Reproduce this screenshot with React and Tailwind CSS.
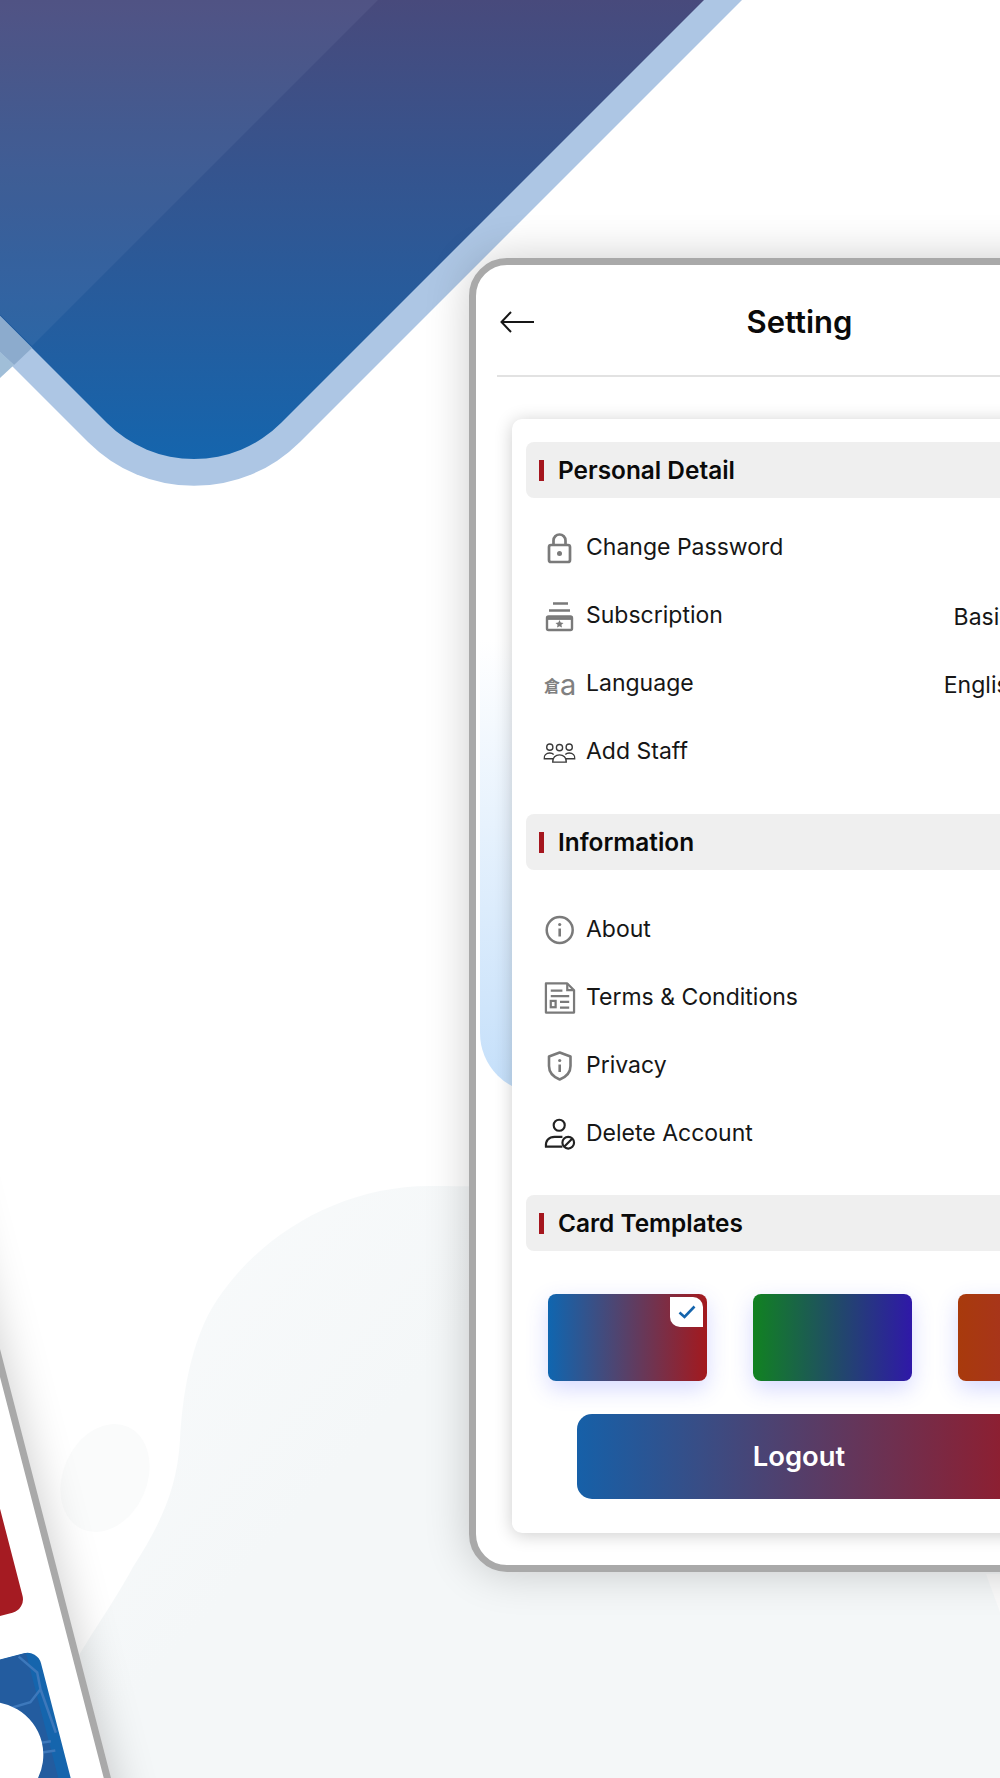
import React from "react";

const G = "#7a7a7a";

function LockIcon() {
  return (
    <svg width="32" height="32" viewBox="0 0 32 32" fill="none" stroke={G} strokeWidth="2.7">
      <rect x="5" y="13" width="21" height="17" rx="2" />
      <path d="M9.500 13V8.500a6 6 0 0 1 12 0V13" />
      <circle cx="15.500" cy="21.500" r="2.500" fill={G} stroke="none" />
    </svg>
  );
}
function SubIcon() {
  return (
    <svg width="32" height="32" viewBox="0 0 32 32" fill="none" stroke={G} strokeWidth="2.400">
      <path d="M9 3.500H24M5 10.500H26" />
      <rect x="3" y="16.500" width="25" height="13.500" rx="1.500" />
      <path d="M3 18.500H28" strokeWidth="2.800" />
      <path d="M15.500 20l1.200 2.600 2.800.3-2.100 1.900.6 2.800-2.500-1.400-2.500 1.400.6-2.800-2.100-1.900 2.800-.3z" fill={G} stroke="none" />
    </svg>
  );
}
function LangIcon() {
  return (
    <span className="flex h-8 w-8 items-center pt-[1px] text-[#808080]">
      <span className="text-[16px] leading-none font-bold font-['Noto_Sans_CJK_TC',sans-serif]">倉</span>
      <span className="text-[29px] leading-none font-['Inter',sans-serif]">a</span>
    </span>
  );
}
function StaffIcon() {
  return (
    <svg width="34" height="32" viewBox="0 0 34 32" fill="none" stroke="#3a3a3a" strokeWidth="1.400" className="-ml-[1px]">
      <circle cx="7" cy="11" r="3.200" />
      <circle cx="17" cy="11.500" r="3.200" />
      <circle cx="27" cy="11" r="3.200" />
      <path d="M10 26.500c-.3-5 3-7.500 7-7.500s7.300 2.500 7 7.500z" />
      <path d="M10.500 23H1.300c-.6-3.500 2-6 5.700-6 1.800 0 3 .5 4 1.500" />
      <path d="M23.500 23h9.200c.6-3.500-2-6-5.700-6-1.800 0-3 .5-4 1.500" />
    </svg>
  );
}
function InfoIcon() {
  return (
    <svg width="32" height="32" viewBox="0 0 32 32" fill="none" stroke={G} strokeWidth="2.500">
      <circle cx="15.700" cy="16" r="13" />
      <path d="M15.700 14.500V22.500" strokeWidth="2.600" />
      <circle cx="15.700" cy="10.500" r="1.600" fill={G} stroke="none" />
    </svg>
  );
}
function TermsIcon() {
  return (
    <svg width="34" height="34" viewBox="0 0 34 34" fill="none" stroke={G} strokeWidth="2.300" className="-ml-[1px]">
      <path d="M3 2h22l7 7v23H3z" strokeLinejoin="round" />
      <path d="M25 2v7h7" />
      <path d="M8 9.500h12M8 15h19M17.500 21h9.500M17.500 27h9.500" />
      <rect x="8" y="20" width="5" height="6.500" />
    </svg>
  );
}
function ShieldIcon() {
  return (
    <svg width="32" height="32" viewBox="0 0 32 32" fill="none" stroke={G} strokeWidth="2.600">
      <path d="M15.700 2.500L26.500 6.500V16c0 6.500-4.500 11-10.800 13.500C9.500 27 5 22.500 5 16V6.500z" strokeLinejoin="round" />
      <path d="M15.700 14.500V22" />
      <circle cx="15.700" cy="10.500" r="1.600" fill={G} stroke="none" />
    </svg>
  );
}
function DeleteIcon() {
  return (
    <svg width="34" height="32" viewBox="0 0 34 32" fill="none" stroke="#222222" strokeWidth="2.200" className="-ml-[1px]">
      <circle cx="16.700" cy="7" r="5.700" />
      <path d="M20 29H3c-.6-6 3-10 9-10h8" />
      <circle cx="26" cy="25" r="6" />
      <path d="M22 29l8-8" />
    </svg>
  );
}

function Section({ title, mt }) {
  return (
    <div className={`flex h-14 items-center rounded-lg bg-[#efefef] pl-[13px] ${mt}`}>
      <span className="h-[21px] w-[5px] bg-[#a5161e]" />
      <span className="ml-[14px] text-[24.400px] font-semibold text-[#0a0a0a]">{title}</span>
    </div>
  );
}

function Row({ icon, label, value }) {
  return (
    <div className="flex h-[68px] items-center pl-[18px] pr-[40px]">
      <span className="flex w-8 justify-center">{icon}</span>
      <span className="ml-[10px] flex-1 pb-[2px] text-[23px] text-[#161616]">{label}</span>
      {value && <span className="w-[100px] pt-[2px] text-center text-[23px] text-[#161616]">{value}</span>}
    </div>
  );
}

function Background() {
  return (
    <svg className="absolute inset-0" width="1000" height="1778" viewBox="0 0 1000 1778">
      <defs>
        <linearGradient id="dia" gradientUnits="userSpaceOnUse" x1="0" y1="0" x2="0" y2="459">
          <stop offset="0" stopColor="#484a7c" />
          <stop offset="1" stopColor="#1565ad" />
        </linearGradient>
        <linearGradient id="blob" gradientUnits="userSpaceOnUse" x1="130" y1="1300" x2="330" y2="1480">
          <stop offset="0" stopColor="#f8fafb" />
          <stop offset="1" stopColor="#f4f7f8" />
        </linearGradient>
      </defs>
      {/* diamond: outer light band then inner gradient */}
      <path d="M742 0L300 442A150 150 0 0 1 88 442L-100 254V0Z" fill="#adc6e4" />
      <path d="M704 0L281 423A123 123 0 0 1 107 423L-100 216V0Z" fill="url(#dia)" />
      {/* lighter overlay */}
      <path d="M378 0L32 346L-30 285V0Z" fill="#c0d8f0" fillOpacity="0.07" />
      <path d="M0 316L32 348L14 365L0 352Z" fill="#8cabcd" />
      <path d="M0 352L14 365L0 378Z" fill="#a0bed8" />
      {/* pale blob */}
      <path
        d="M60 1690C85 1640 110 1610 133 1567C160 1525 177 1490 180 1440C182 1400 190 1340 217 1300C260 1235 340 1186 430 1186C500 1186 600 1190 1000 1190V1778H0V1690Z"
        fill="url(#blob)"
      />
      <ellipse cx="105" cy="1478" rx="42" ry="56" transform="rotate(24 105 1478)" fill="#fafbfb" />
      <path d="M986 1574H1000V1612Z" fill="#fbfbfb" />
    </svg>
  );
}

function SidePhone() {
  return (
    <div className="absolute left-[-758px] top-[970px] h-[1300px] w-[660px] origin-top-right rotate-[-14.5deg] rounded-[38px] border-[7px] border-[#a9a9a9] bg-white shadow-[0_0_45px_rgba(0,0,0,0.2)]">
      <div className="absolute right-[33px] top-[360px] h-[283px] w-[300px] overflow-hidden rounded-[14px] bg-[#a51b22]">
        <svg width="300" height="283" viewBox="0 0 300 283" fill="none" stroke="#bb4a50" strokeWidth="2">
          <path d="M240 262L274 262M240 252L280 252M250 190L268 215L262 250" />
        </svg>
      </div>
      <div className="absolute right-[32px] top-[685px] h-[400px] w-[300px] overflow-hidden rounded-[14px] bg-[#1565ad]">
        <svg width="300" height="400" viewBox="0 0 300 400" fill="none">
          <rect x="0" y="0" width="288" height="400" fill="#235c9f" />
          <path d="M280 2L294 22L293 39L280 49L250 50L232 30L240 2M293 39L297 85M270 90L290 92M272 100L292 102" stroke="#3d78bb" strokeWidth="2.500" />
          <circle cx="228" cy="90" r="53" fill="#ffffff" />
          <path d="M192 70H210V95M186 118H202M210 60V72" stroke="#1565ad" strokeWidth="3" />
        </svg>
      </div>
    </div>
  );
}

export default function App() {
  return (
    <div className="relative h-[1778px] w-[1000px] overflow-hidden bg-white font-['Inter',sans-serif]">
      <Background />
      <SidePhone />
      <div className="relative ml-[469px] w-[661px] pt-[258px]">
        <div className="relative h-[1314px] w-[661px] rounded-[38px] border-[7px] border-[#a9a9a9] bg-white shadow-[0_0_45px_rgba(0,0,0,0.2)]">
          <div className="absolute left-[4px] top-[375px] h-[453px] w-[640px] rounded-bl-[60px] bg-[linear-gradient(to_bottom,#ffffff,#c4dffa)]" />
          <div className="relative">
            <div className="mx-[21px] grid h-[112px] grid-cols-[1fr_auto_1fr] items-center border-b-2 border-[#e2e2e2] pt-[3px]">
              <svg width="34" height="22" viewBox="0 0 34 22" fill="none" stroke="#161616" strokeWidth="2" className="ml-[3px]">
                <path d="M34 11H2M11 1L1.500 11L11 21" />
              </svg>
              <span className="text-[31px] font-semibold leading-none text-[#0a0a0a]">Setting</span>
              <span />
            </div>
            <div className="mx-[36px] mt-[42px] h-[1114px] w-[575px] rounded-[10px] bg-white px-[14px] pt-[23px] shadow-[0_2px_18px_rgba(0,0,0,0.2)]">
              <Section title="Personal Detail" mt="" />
              <div className="mt-[16px]">
                <Row icon={<LockIcon />} label="Change Password" />
                <Row icon={<SubIcon />} label="Subscription" value="Basic" />
                <Row icon={<LangIcon />} label="Language" value="English" />
                <Row icon={<StaffIcon />} label="Add Staff" />
              </div>
              <Section title="Information" mt="mt-[28px]" />
              <div className="mt-[26px]">
                <Row icon={<InfoIcon />} label="About" />
                <Row icon={<TermsIcon />} label="Terms & Conditions" />
                <Row icon={<ShieldIcon />} label="Privacy" />
                <Row icon={<DeleteIcon />} label="Delete Account" />
              </div>
              <Section title="Card Templates" mt="mt-[27px]" />
              <div className="ml-[22px] mt-[43px] flex gap-[46px]">
                <div className="relative h-[87px] w-[159px] shrink-0 rounded-lg bg-[linear-gradient(to_right,#0f66b0,#a3191e)] shadow-[0_8px_22px_rgba(70,80,255,0.22)]">
                  <div className="absolute right-[4px] top-[3px] flex h-[30px] w-[33px] items-center justify-center rounded-bl-[10px] rounded-tr-[10px] bg-white">
                    <svg width="18" height="14" viewBox="0 0 18 14" fill="none" stroke="#1565ad" strokeWidth="2.600">
                      <path d="M1.500 7.500L6.500 12L16.500 1.500" />
                    </svg>
                  </div>
                </div>
                <div className="h-[87px] w-[159px] shrink-0 rounded-lg bg-[linear-gradient(to_right,#118221,#2f18a8)] shadow-[0_8px_22px_rgba(70,80,255,0.22)]" />
                <div className="h-[87px] w-[159px] shrink-0 rounded-lg bg-[linear-gradient(to_right,#a83a0c,#a82840)] shadow-[0_8px_22px_rgba(70,80,255,0.22)]" />
              </div>
              <div className="ml-[51px] mt-[33px] flex h-[85px] w-[444px] items-center justify-center rounded-[15px] bg-[linear-gradient(to_right,#1660a8,#921c2c)]">
                <span className="text-[27.400px] font-semibold text-white">Logout</span>
              </div>
            </div>
          </div>
        </div>
      </div>
    </div>
  );
}
